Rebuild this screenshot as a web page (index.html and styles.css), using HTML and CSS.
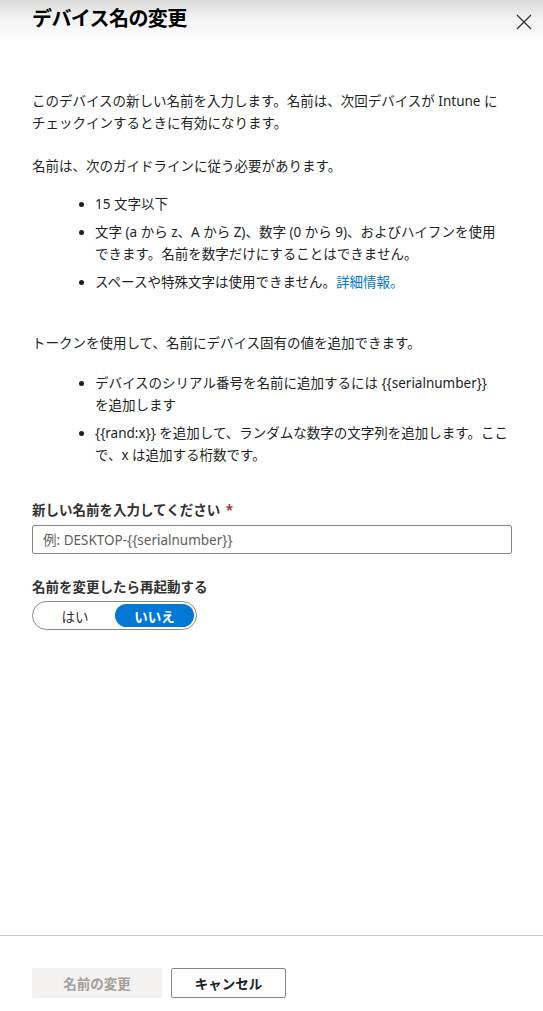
FILE: index.html
```html
<!DOCTYPE html>
<html lang="ja">
<head>
<meta charset="utf-8">
<title>デバイス名の変更</title>
<link rel="stylesheet" href="styles.css">
</head>
<body>
<div class="panel">
  <header class="panel-header">
    <h1 class="panel-title">デバイス名の変更</h1>
    <button class="close-btn" aria-label="閉じる">
      <svg width="16" height="16" viewBox="0 0 16 16"><path d="M1 1 L15 15 M15 1 L1 15" stroke="#323130" stroke-width="1.3" fill="none"/></svg>
    </button>
  </header>
  <main class="panel-body">
    <p class="para">このデバイスの新しい名前を入力します。名前は、次回デバイスが Intune に<br>チェックインするときに有効になります。</p>
    <p class="para para-gap">名前は、次のガイドラインに従う必要があります。</p>
    <ul class="rules">
      <li>15 文字以下</li>
      <li>文字 (a から z、A から Z)、数字 (0 から 9)、およびハイフンを使用<br>できます。名前を数字だけにすることはできません。</li>
      <li>スペースや特殊文字は使用できません。<a class="link" href="#">詳細情報。</a></li>
    </ul>
    <p class="para para-token">トークンを使用して、名前にデバイス固有の値を追加できます。</p>
    <ul class="rules rules-token">
      <li>デバイスのシリアル番号を名前に追加するには {{serialnumber}}<br>を追加します</li>
      <li>{{rand:x}} を追加して、ランダムな数字の文字列を追加します。ここ<br>で、x は追加する桁数です。</li>
    </ul>
    <label class="field-label field-name" for="newname">新しい名前を入力してください <span class="req">*</span></label>
    <input class="text-input" id="newname" type="text" placeholder="例: DESKTOP-{{serialnumber}}">
    <div class="field-label field-restart">名前を変更したら再起動する</div>
    <div class="toggle">
      <span class="toggle-opt">はい</span>
      <span class="toggle-opt selected">いいえ</span>
    </div>
  </main>
  <footer class="panel-footer">
    <button class="btn btn-primary" disabled>名前の変更</button>
    <button class="btn btn-default">キャンセル</button>
  </footer>
</div>
</body>
</html>
```
FILE: styles.css
```css
* { box-sizing: border-box; }
html, body { margin: 0; padding: 0; background: #fff; }
body {
  font-family: "Noto Sans", "Noto Sans CJK JP", sans-serif;
  font-size: 14px;
  color: #323130;
}
.panel {
  display: flex;
  flex-direction: column;
  height: 1011px;
  width: 543px;
}
.panel-header {
  height: 44px;
  padding: 4px 10px 0 32px;
  display: flex;
  align-items: flex-start;
  justify-content: space-between;
  background: linear-gradient(to bottom, #d9d9d9 0px, #f2f2f2 18px, #ffffff 42px);
}
.panel-title {
  margin: 0;
  font-size: 20px;
  line-height: 30px;
  font-weight: 700;
  letter-spacing: -0.6px;
  color: #000;
}
.close-btn {
  border: 0;
  background: transparent;
  padding: 0;
  margin-top: 9px;
  width: 18px;
  height: 18px;
  display: flex;
  align-items: center;
  justify-content: center;
}
.panel-body {
  padding: 46px 24px 0 32px;
  display: flex;
  flex-direction: column;
  flex: 1;
}
.para {
  margin: 0;
  font-size: 13.5px;
  line-height: 22px;
  color: #201f1e;
}
.para-gap { margin-top: 21px; }
.para-token { margin-top: 39px; }
.rules {
  margin: 16px 0 0;
  padding: 0 0 0 63px;
  font-size: 13.5px;
  line-height: 22px;
  color: #201f1e;
  display: flex;
  flex-direction: column;
  gap: 6px;
}
.rules-token { margin-top: 18px; }
.link { color: #0078d4; text-decoration: none; }
.field-label {
  font-weight: 600;
  font-size: 13.5px;
  line-height: 20px;
  color: #323130;
}
.field-name { margin-top: 34px; }
.req { color: #a4262c; margin-left: 2px; }
.text-input {
  margin-top: 5px;
  width: 480px;
  height: 29px;
  border: 1px solid #8a8886;
  border-radius: 2px;
  padding: 0 10px;
  font-family: inherit;
  font-size: 13.5px;
  color: #323130;
  outline: none;
}
.text-input::placeholder { color: #605e5c; }
.field-restart { margin-top: 23px; }
.toggle {
  margin-top: 4px;
  width: 165px;
  height: 29px;
  border: 1px solid #8a8886;
  border-radius: 15px;
  display: flex;
  align-items: center;
  padding: 2px;
}
.toggle-opt {
  flex: 1;
  height: 23px;
  display: flex;
  align-items: center;
  justify-content: center;
  border-radius: 12px;
  font-size: 13.5px;
  color: #323130;
}
.toggle-opt:first-child { flex: 0 0 80px; }
.toggle-opt.selected {
  background: #0078d4;
  color: #fff;
  font-weight: 600;
}
.panel-footer {
  border-top: 1px solid #c8c6c4;
  height: 76px;
  padding: 32px 32px 0;
  display: flex;
  gap: 9px;
  align-items: flex-start;
}
.btn {
  height: 30px;
  font-family: inherit;
  font-size: 13.5px;
  font-weight: 600;
  border-radius: 2px;
  padding: 0;
}
.btn-primary {
  width: 130px;
  background: #f3f2f1;
  border: 1px solid #f3f2f1;
  color: #a19f9d;
}
.btn-default {
  width: 115px;
  background: #fff;
  border: 1px solid #8a8886;
  color: #201f1e;
}
```
